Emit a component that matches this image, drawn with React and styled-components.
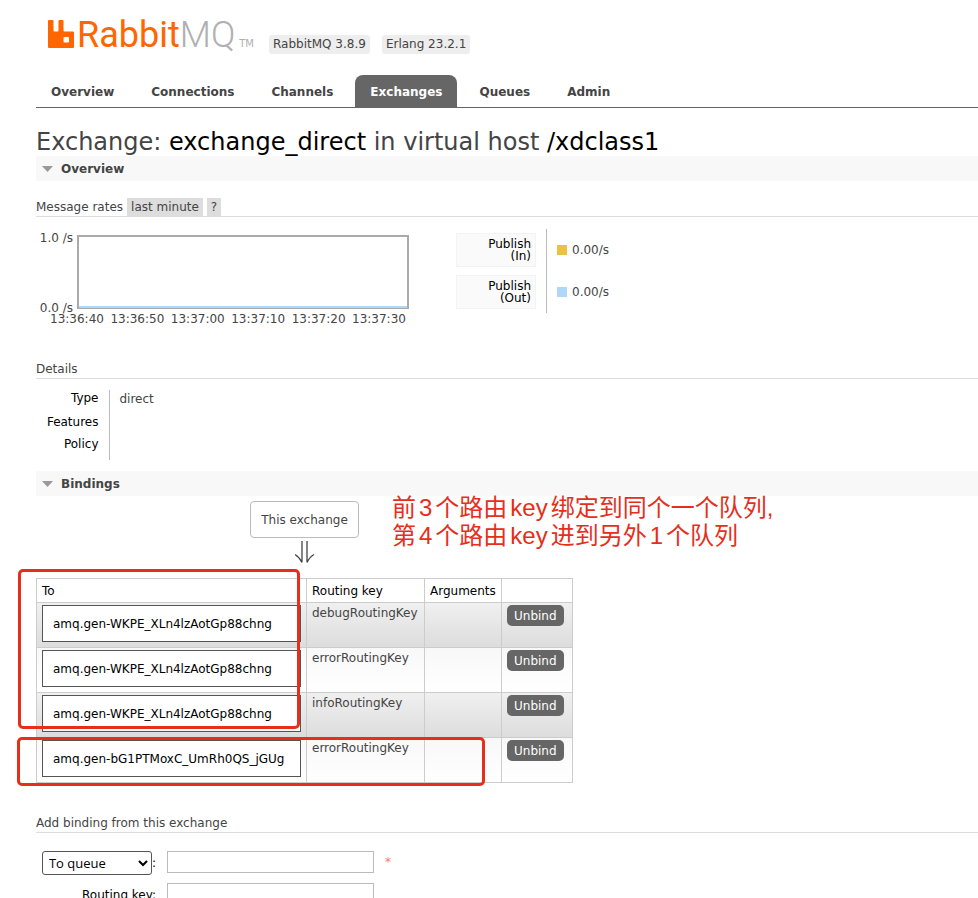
import React from "react";
import styled, { createGlobalStyle, css } from "styled-components";

const GlobalStyle = createGlobalStyle`
  *, *::before, *::after { box-sizing: border-box; }
  html { scrollbar-width: none; }
  body {
    margin: 0;
    background: #fff;
    color: #444;
    font: 12px/16px Verdana, "DejaVu Sans", sans-serif;
    overflow-x: hidden;
  }
`;

const Page = styled.div`
  padding: 16px 0 16px 36px;
`;

const Header = styled.header`
  display: flex;
  align-items: flex-end;
  height: 38px;
  padding-left: 12px;
`;

const Logo = styled.a`
  display: flex;
  align-items: flex-end;
  height: 38px;
  color: #f60;
  text-decoration: none;
`;

const LogoMark = styled.svg`
  display: block;
  width: 26px;
  height: 28px;
  margin: 0 3px 6px 0;
`;

const LogoText = styled.span`
  font: 36px/38px Roboto, sans-serif;
`;

const LogoTail = styled.span`
  color: #b0b0b0;
  font-weight: 300;
`;

const TradeMark = styled.span`
  margin: 0 15px 4px 4px;
  color: #b0b0b0;
  font: 10px/12px "DejaVu Sans", sans-serif;
`;

const Version = styled.span`
  margin-right: 12px;
  padding: 1px 4px 2px;
  border-radius: 3px;
  background: #eee;
`;

const Tabs = styled.nav`
  display: flex;
  gap: 7px;
  margin-top: 21px;
  border-bottom: 1px solid #666;
`;

const Tab = styled.a`
  padding: 9px 15px 7px;
  border-radius: 8px 8px 0 0;
  background: ${(p) => (p.$active ? "#666" : "transparent")};
  color: ${(p) => (p.$active ? "#fff" : "#444")};
  font-weight: bold;
  text-decoration: none;
`;

const Title = styled.h1`
  margin: 21px 0 0;
  font-size: 24px;
  font-weight: normal;
  line-height: 27px;
  white-space: nowrap;
`;

const Strong = styled.b`
  color: #000;
  font-weight: normal;
`;

const SectionTitle = styled.h2`
  display: flex;
  align-items: center;
  gap: 8px;
  height: 25px;
  margin: 0;
  padding-left: 6px;
  background: #f8f8f8;
  font-size: 12px;
`;

const Triangle = styled.svg`
  display: block;
  width: 11px;
  height: 6px;
`;

const SubTitle = styled.h3`
  display: flex;
  gap: 4px;
  margin: 0;
  padding-top: ${(p) => p.$space}px;
  border-bottom: 1px solid #ddd;
  font-size: 12px;
  font-weight: normal;
  line-height: 18px;
`;

const Chip = styled.a`
  padding: 0 4px;
  background: #ddd;
  color: #444;
  text-decoration: none;
`;

const Rates = styled.div`
  display: flex;
  align-items: flex-start;
  height: 143px;
  padding-top: 12px;
`;

const Chart = styled.div`
  display: grid;
  grid-template-columns: 37px 332px;
  column-gap: 4px;
  width: 420px;
  padding-top: 6px;
`;

const YAxis = styled.div`
  display: flex;
  flex-direction: column;
  justify-content: space-between;
  height: 86px;
  margin: -5px 0 -7px;
  text-align: right;
  white-space: nowrap;
`;

const Plot = styled.svg`
  display: block;
  width: 332px;
  height: 74px;
`;

const XAxis = styled.div`
  grid-column: 1 / -1;
  display: flex;
  justify-content: space-between;
  width: 356px;
  margin: 2px 0 0 14px;
  white-space: nowrap;
`;

const Legend = styled.table`
  border-collapse: collapse;
`;

const LegendHead = styled.th`
  width: 90px;
  height: 42px;
  padding: 0 10px 0 0;
  border-right: 1px solid #bbb;
  font-weight: normal;
`;

const LegendButton = styled.button`
  display: block;
  width: 80px;
  height: 34px;
  padding: 0 4px;
  border: 1px solid #f3f3f3;
  background: #fafafa;
  color: #000;
  font: inherit;
  line-height: 12px;
  text-align: right;
`;

const LegendValue = styled.td`
  padding: 0 0 0 10px;
`;

const Rate = styled.span`
  display: flex;
  align-items: center;
  gap: 5px;
`;

const Swatch = styled.i`
  width: 10px;
  height: 10px;
  background: ${(p) => p.$color};
`;

const Facts = styled.table`
  margin: 11px 0;
  border-collapse: collapse;
`;

const FactName = styled.th`
  width: 73px;
  height: ${(p) => p.$height}px;
  padding: 0 10px 0 0;
  border-right: 1px solid #bbb;
  color: #000;
  font-weight: normal;
  text-align: right;
  vertical-align: top;
`;

const FactValue = styled.td`
  padding: 1px 10px;
  vertical-align: top;
`;

const Bindings = styled.div`
  position: relative;
`;

const Flow = styled.div`
  display: flex;
  flex-direction: column;
  align-items: center;
  width: 537px;
  padding-top: 5px;
`;

const ExchangeBox = styled.span`
  padding: 10px 10px 9px;
  border: 1px solid #bbb;
  border-radius: 4px;
`;

const Arrow = styled.svg`
  display: block;
  width: 20px;
  height: 23px;
  margin: 3px 0 14px;
`;

const BindingTable = styled.table`
  width: 537px;
  border-collapse: collapse;
  table-layout: fixed;
`;

const Head = styled.th`
  width: ${(p) => p.$width}px;
  height: 24px;
  padding: 0 5px;
  border: 1px solid #ccc;
  color: #000;
  font-weight: normal;
  text-align: left;
`;

const BindingRow = styled.tr`
  background: ${(p) =>
    p.$shaded
      ? "linear-gradient(#f0f0f0, #dcdcdc)"
      : "linear-gradient(#f8f8f8, #fff)"};
`;

const Cell = styled.td`
  height: 45px;
  padding: 2px 5px;
  border: 1px solid #ccc;
  vertical-align: top;
`;

const QueueLink = styled.a`
  display: block;
  padding: 10px 10px 9px;
  border: 1px solid #555;
  background: #fff;
  color: #000;
  text-decoration: none;
  white-space: nowrap;
`;

const UnbindButton = styled.button`
  display: block;
  height: 21px;
  padding: 0 7px;
  border: 0;
  border-radius: 5px;
  background: #666;
  color: #fff;
  font: inherit;
`;

const Marker = styled.div`
  position: absolute;
  border: 3px solid #e62e1a;
  border-radius: 5px;
  pointer-events: none;
  ${(p) =>
    p.$wide
      ? css`
          left: -19px;
          top: 241px;
          width: 468px;
          height: 49px;
        `
      : css`
          left: -18px;
          top: 73px;
          width: 282px;
          height: 160px;
        `}
`;

const Note = styled.p`
  position: absolute;
  left: 356px;
  top: -2px;
  margin: 0;
  color: #e62e1a;
  font: 24px/28px "Liberation Sans", "Noto Sans CJK SC", sans-serif;
  text-autospace: normal;
  white-space: nowrap;
`;

const Form = styled.form`
  display: grid;
  grid-template-columns: 120px 207px auto;
  justify-content: start;
  align-items: start;
  gap: 8px 11px;
  padding-top: 18px;
`;

const FieldName = styled.div`
  display: flex;
  justify-content: flex-end;
  align-items: center;
  min-height: 24px;
  color: #000;
`;

const Select = styled.select`
  width: 110px;
  height: 24px;
  padding: 0 2px;
  border: 1px solid #555;
  border-radius: 3px;
  background: #fff;
  color: #000;
  font: 13px "Open Sans", sans-serif;
`;

const TextInput = styled.input`
  height: 22px;
  padding: 2px 4px;
  border: 1px solid #bbb;
  font: inherit;
`;

const Required = styled.span`
  padding-top: 3px;
  color: #f77;
`;

const tabs = ["Overview", "Connections", "Channels", "Exchanges", "Queues", "Admin"];
const times = ["13:36:40", "13:36:50", "13:37:00", "13:37:10", "13:37:20", "13:37:30"];
const rates = [
  { way: "(In)", color: "#edc240" },
  { way: "(Out)", color: "#afd8f8" },
];
const bindings = [
  { queue: "amq.gen-WKPE_XLn4lzAotGp88chng", key: "debugRoutingKey" },
  { queue: "amq.gen-WKPE_XLn4lzAotGp88chng", key: "errorRoutingKey" },
  { queue: "amq.gen-WKPE_XLn4lzAotGp88chng", key: "infoRoutingKey" },
  { queue: "amq.gen-bG1PTMoxC_UmRh0QS_jGUg", key: "errorRoutingKey" },
];

function Section({ children }) {
  return (
    <SectionTitle>
      <Triangle viewBox="0 0 11 6" aria-hidden="true">
        <path d="M0 0h11L5.500 6z" fill="#999" />
      </Triangle>
      {children}
    </SectionTitle>
  );
}

export default function App() {
  return (
    <Page>
      <GlobalStyle />
      <Header>
        <Logo href="#/">
          <LogoMark viewBox="0 0 26 28" aria-hidden="true">
            <path
              fill="#f60"
              fillRule="evenodd"
              d="M1 0h3.500a1 1 0 0 1 1 1v9.500a1 1 0 0 0 1 1h3a1 1 0 0 0 1-1V1a1 1 0 0 1 1-1H14.500a1 1 0 0 1 1 1v9.500a1 1 0 0 0 1 1H25a1 1 0 0 1 1 1V27a1 1 0 0 1-1 1H1a1 1 0 0 1-1-1V1a1 1 0 0 1 1-1zM16.500 17a1 1 0 0 0-1 1v3.500a1 1 0 0 0 1 1H20a1 1 0 0 0 1-1V18a1 1 0 0 0-1-1z"
            />
          </LogoMark>
          <LogoText>
            Rabbit<LogoTail>MQ</LogoTail>
          </LogoText>
          <TradeMark>TM</TradeMark>
        </Logo>
        <Version>RabbitMQ 3.8.9</Version>
        <Version>Erlang 23.2.1</Version>
      </Header>
      <Tabs>
        {tabs.map((name) => (
          <Tab key={name} href={"#/" + name.toLowerCase()} $active={name === "Exchanges"}>
            {name}
          </Tab>
        ))}
      </Tabs>
      <main>
        <Title>
          Exchange: <Strong>exchange_direct</Strong> in virtual host <Strong>/xdclass1</Strong>
        </Title>
        <Section>Overview</Section>
        <SubTitle $space={17}>
          Message rates
          <Chip href="#range">last minute</Chip>
          <Chip href="#help">?</Chip>
        </SubTitle>
        <Rates>
          <Chart>
            <YAxis>
              <span>1.0 /s</span>
              <span>0.0 /s</span>
            </YAxis>
            <Plot viewBox="0 0 332 74" aria-hidden="true">
              <rect x="1" y="1" width="330" height="72" fill="#fff" stroke="#aaa" strokeWidth="2" />
              <path d="M2 72h328" stroke="#afd8f8" strokeWidth="2" />
            </Plot>
            <XAxis>
              {times.map((time) => (
                <span key={time}>{time}</span>
              ))}
            </XAxis>
          </Chart>
          <Legend>
            <tbody>
              {rates.map((rate) => (
                <tr key={rate.way}>
                  <LegendHead scope="row">
                    <LegendButton type="button">
                      Publish
                      <br />
                      {rate.way}
                    </LegendButton>
                  </LegendHead>
                  <LegendValue>
                    <Rate>
                      <Swatch $color={rate.color} />
                      0.00/s
                    </Rate>
                  </LegendValue>
                </tr>
              ))}
            </tbody>
          </Legend>
        </Rates>
        <SubTitle $space={0}>Details</SubTitle>
        <Facts>
          <tbody>
            <tr>
              <FactName scope="row" $height={24}>Type</FactName>
              <FactValue>direct</FactValue>
            </tr>
            <tr>
              <FactName scope="row" $height={22}>Features</FactName>
              <FactValue />
            </tr>
            <tr>
              <FactName scope="row" $height={24}>Policy</FactName>
              <FactValue />
            </tr>
          </tbody>
        </Facts>
        <Section>Bindings</Section>
        <Bindings>
          <Flow>
            <ExchangeBox>This exchange</ExchangeBox>
            <Arrow viewBox="0 0 20 23" fill="none" stroke="#444" aria-hidden="true">
              <path d="M7 0v21M12 0v21M0 13.500q4.500 2.500 7 8M19 13.500q-4.500 2.500-7 8" strokeWidth="1.300" />
            </Arrow>
          </Flow>
          <BindingTable>
            <thead>
              <tr>
                <Head $width={270}>To</Head>
                <Head $width={118}>Routing key</Head>
                <Head $width={77}>Arguments</Head>
                <Head $width={71} />
              </tr>
            </thead>
            <tbody>
              {bindings.map((binding, index) => (
                <BindingRow key={index} $shaded={index % 2 === 0}>
                  <Cell>
                    <QueueLink href="#/queues">{binding.queue}</QueueLink>
                  </Cell>
                  <Cell>{binding.key}</Cell>
                  <Cell />
                  <Cell>
                    <UnbindButton type="button">Unbind</UnbindButton>
                  </Cell>
                </BindingRow>
              ))}
            </tbody>
          </BindingTable>
          <Marker />
          <Marker $wide />
          <Note>
            前3个路由key绑定到同个一个队列,
            <br />
            第4个路由key进到另外1个队列
          </Note>
        </Bindings>
        <SubTitle $space={31}>Add binding from this exchange</SubTitle>
        <Form>
          <FieldName>
            <Select aria-label="Destination type" defaultValue="queue">
              <option value="queue">To queue</option>
              <option value="exchange">To exchange</option>
            </Select>
            :
          </FieldName>
          <TextInput type="text" aria-label="Destination" required />
          <Required>*</Required>
          <FieldName as="label" htmlFor="routing-key">
            Routing key:
          </FieldName>
          <TextInput id="routing-key" type="text" />
        </Form>
      </main>
    </Page>
  );
}
